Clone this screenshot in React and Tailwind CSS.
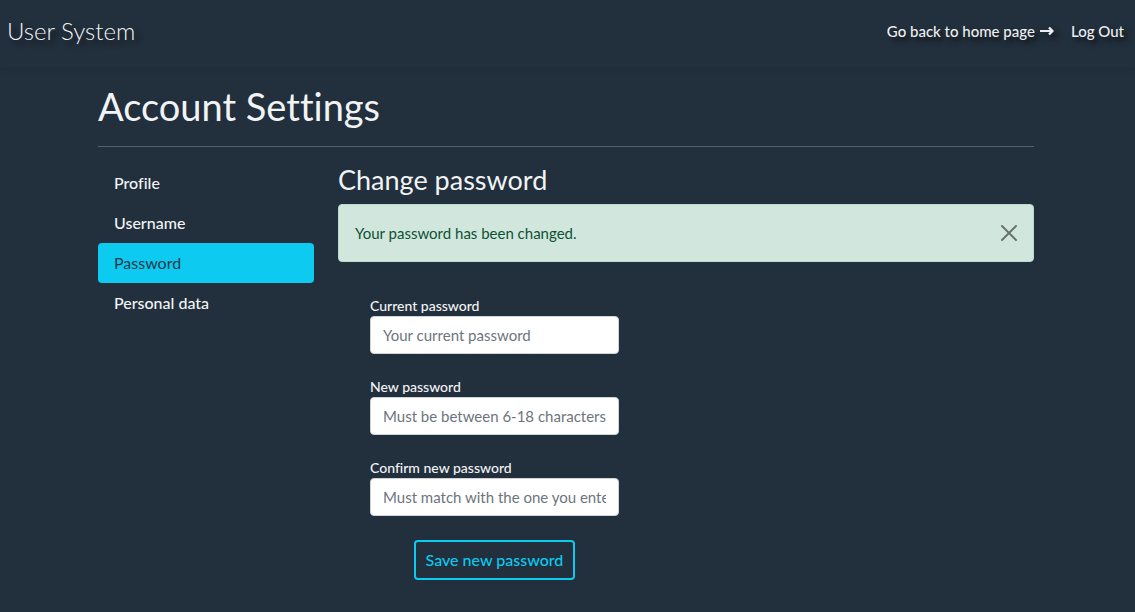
import { useState } from "react";

const links = ["Profile", "Username", "Password", "Personal data"];

const fields = [
  { id: "current", label: "Current password", hint: "Your current password" },
  { id: "next", label: "New password", hint: "Must be between 6-18 characters" },
  { id: "confirm", label: "Confirm new password", hint: "Must match with the one you entered" },
];

function Header() {
  return (
    <header className="flex h-[68px] items-start justify-between pt-[11px] pr-[11px] pl-[7px] shadow-[0_2px_5px_rgba(0,0,0,0.06)] [text-shadow:4px_4px_5px_rgba(0,0,0,0.6)]">
      <a href="#" className="text-2xl leading-10 font-light text-[#f1f3f5]">
        User System
      </a>
      <nav className="flex items-center gap-4 text-[15px] leading-10 font-medium text-[#eceef0]">
        <a href="#" className="flex items-center gap-1">
          Go back to home page
          <svg viewBox="0 0 16 16" className="size-4 overflow-visible drop-shadow-[4px_4px_3px_rgba(0,0,0,0.6)]" fill="none" stroke="currentColor" strokeWidth="2" aria-hidden="true">
            <path d="M1 8h12" />
            <path d="M10 4.5l3.5 3.5L10 11.5" strokeWidth="2.4" strokeLinejoin="round" />
          </svg>
        </a>
        <a href="#">Log Out</a>
      </nav>
    </header>
  );
}

function Sidebar() {
  return (
    <nav className="w-[216px] shrink-0 text-base leading-6">
      <ul>
        {links.map((name) => (
          <li key={name}>
            <a
              href="#"
              className={
                name === "Password"
                  ? "block rounded bg-[#0dcaf0] px-4 py-2 text-[#22384a]"
                  : "block rounded px-4 py-2 font-medium text-[#f1f3f5]"
              }
            >
              {name}
            </a>
          </li>
        ))}
      </ul>
    </nav>
  );
}

function Alert() {
  const [open, setOpen] = useState(true);
  if (!open) return null;
  return (
    <div role="alert" className="flex items-center justify-between rounded border border-[#badbcc] bg-[#d1e7dd] p-4 text-[15px] leading-6 text-[#0f5132]">
      <span>Your password has been changed.</span>
      <button type="button" aria-label="Close" onClick={() => setOpen(false)} className="text-black opacity-50">
        <svg viewBox="0 0 16 16" className="size-4" fill="none" stroke="currentColor" strokeWidth="2" strokeLinecap="round">
          <path d="M1 1l14 14M15 1L1 15" />
        </svg>
      </button>
    </div>
  );
}

export default function App() {
  return (
    <div className="min-h-screen bg-[#222f3c] font-[Lato,sans-serif] text-[#f1f3f5] [font-variant-ligatures:none]">
      <Header />
      <div className="pr-[3px]">
        <main className="mx-auto max-w-[936px] pt-[14px] pb-8">
          <h1 className="text-[38px] leading-12">Account Settings</h1>
          <hr className="my-4 border-[#56606a]" />
          <div className="flex gap-6">
            <Sidebar />
            <section className="min-w-0 flex-1">
              <h2 className="mb-2 text-[27px] leading-[33px]">Change password</h2>
              <Alert />
              <form className="ml-8 flex w-[249px] flex-col gap-6 pt-[35px]" onSubmit={(e) => e.preventDefault()}>
                {fields.map((f) => (
                  <div key={f.id}>
                    <label htmlFor={f.id} className="block pb-px text-sm leading-[18px] font-medium">
                      {f.label}
                    </label>
                    <input
                      id={f.id}
                      type="password"
                      placeholder={f.hint}
                      className="block h-[38px] w-full rounded border border-[#ced4da] bg-white px-3 text-[15px] text-[#212529] placeholder:text-[#6c757d]"
                    />
                  </div>
                ))}
                <button type="submit" className="self-center rounded border-2 border-[#0dcaf0] px-2.5 py-1.5 text-base leading-6 font-medium text-[#0dcaf0]">
                  Save new password
                </button>
              </form>
            </section>
          </div>
        </main>
      </div>
    </div>
  );
}
